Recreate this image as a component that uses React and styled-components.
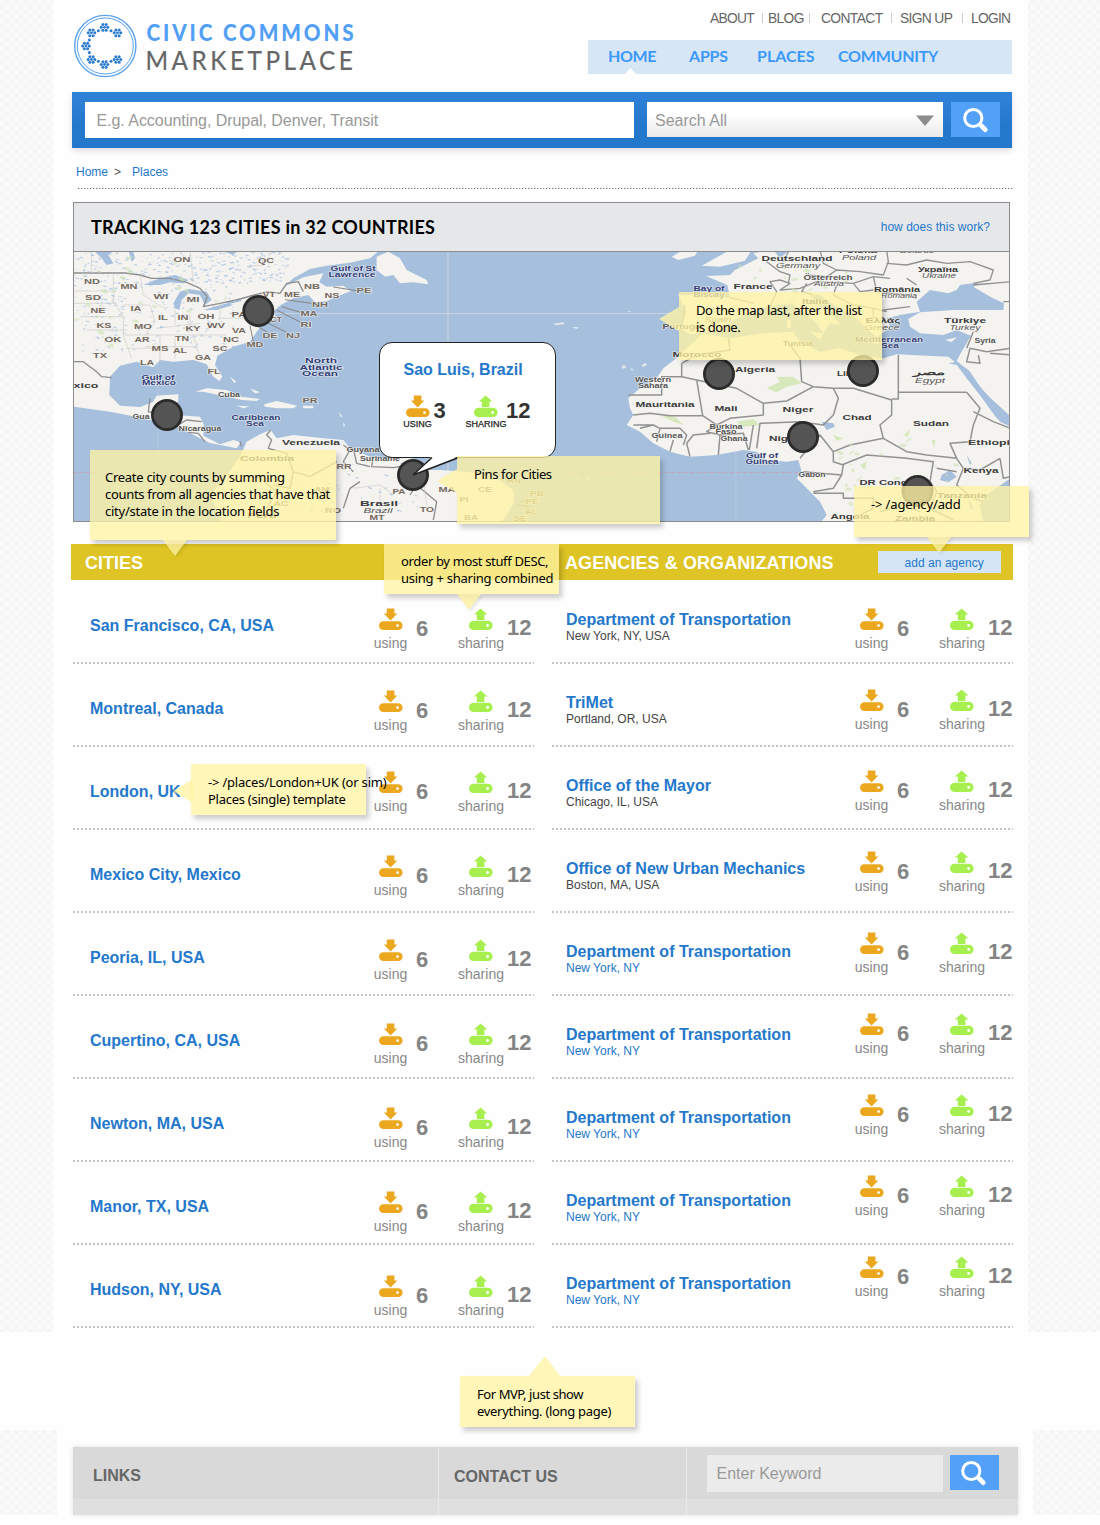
import React from "react";
import styled, { createGlobalStyle, css } from "styled-components";

const Global = createGlobalStyle`
  *, *::before, *::after { box-sizing: border-box; }
  body { margin: 0; background: #fefefe; font-family: "Liberation Sans", Arial, sans-serif; }
`;

const blue = "#2478cc";
const checks = css`
  background: repeating-conic-gradient(#f5f5f5 0 25%, #fafafa 0 50%) 0 0 / 9.34px 9.34px;
`;

const Page = styled.div`
  position: relative;
  width: 1100px;
  height: 1525px;
  overflow: hidden;
`;
const Backdrop = styled.div`
  ${checks}
  height: 1332px;
  padding-left: 53px;
`;
const Sheet = styled.main`
  width: 975px;
  height: 1332px;
  padding: 0 15px 0 19px;
  background: #fefefe;
`;

/* Header */
const Header = styled.header`
  display: flex;
  justify-content: space-between;
  height: 92px;
  padding: 0 1px 0 2px;
`;
const LogoSvg = styled.svg`
  margin-top: 14px;
  display: block;
`;
const HeaderRight = styled.div`
  width: 424px;
  padding-top: 11px;
`;
const TopLinks = styled.div`
  display: flex;
  justify-content: flex-end;
  height: 16px;
  align-items: center;
`;
const TopLink = styled.a`
  width: ${(p) => p.$w}px;
  padding-left: ${(p) => p.$pad}px;
  font-size: 13.8px;
  line-height: 16px;
  letter-spacing: ${(p) => p.$ls}px;
  color: #666;
  white-space: nowrap;
  background: ${(p) => (p.$last ? "none" : "linear-gradient(#ccc, #ccc) right 0 top 2px / 1px 10px no-repeat")};
`;
const Nav = styled.nav`
  display: flex;
  height: 34px;
  margin-top: 13px;
  padding-left: 20px;
  background: #d7e6f5;
`;
const NavItem = styled.a`
  display: flex;
  flex-direction: column;
  justify-content: space-between;
  width: ${(p) => p.$w}px;
  font: 700 16px/32px Lato, sans-serif;
  letter-spacing: ${(p) => p.$ls}px;
  color: #3a99fb;
`;
const Caret = styled.svg`
  display: block;
  margin: -4px 0 0 15px;
`;

/* Search */
const SearchBar = styled.form`
  display: flex;
  width: 940px;
  height: 56px;
  padding: 10px 12px 0 13px;
  background: linear-gradient(#2f82d8, #2478cc 60%);
  box-shadow: 0 3px 6px rgba(0, 0, 0, 0.12);
`;
const FieldText = styled.span`
  font-size: 16px;
  color: #999;
  white-space: nowrap;
  letter-spacing: ${(p) => p.$ls || 0}px;
`;
const SearchField = styled.div`
  width: 549px;
  height: 36px;
  padding-left: 11.5px;
  line-height: 37px;
  background: #fff;
`;
const SearchSelect = styled.div`
  display: flex;
  align-items: center;
  justify-content: space-between;
  width: 296px;
  height: 35px;
  margin: 0 8px 0 13px;
  padding: 2px 9px 0 8px;
  background: linear-gradient(#fff 35%, #e9e9e9);
`;
const SearchButton = styled.div`
  display: flex;
  align-items: center;
  justify-content: center;
  width: 49px;
  height: 35px;
  background: #52a0f8;
`;

const Crumbs = styled.div`
  display: flex;
  height: 41px;
  margin-left: 6px;
  padding: 16px 0 0;
  font-size: 12px;
  line-height: 16px;
  color: ${blue};
  background: repeating-linear-gradient(90deg, #777 0 1px, #ccc 1px 2px, #fff 2px 3px) bottom / 100% 1px no-repeat;
`;
const Crumb = styled.a`
  margin-left: ${(p) => p.$ml}px;
  letter-spacing: ${(p) => p.$ls || 0}px;
  color: ${(p) => p.$color || blue};
`;

/* Map panel */
const MapPanel = styled.section`
  position: relative;
  width: 937px;
  height: 320px;
  margin: 13px 0 0 1px;
  border: 1px solid #8c8c8e;
`;
const MapHeader = styled.div`
  display: flex;
  align-items: center;
  justify-content: space-between;
  height: 49px;
  padding: 0 19px 0 17px;
  background: #e6e7e9;
  border-bottom: 1px solid #8c8c8e;
`;
const MapTitle = styled.h1`
  margin: 0;
  font: 700 18px/24px Lato, sans-serif;
  letter-spacing: 0.27px;
  color: #000;
`;
const HelpLink = styled.a`
  font-size: 12px;
  letter-spacing: 0.03px;
  color: ${blue};
`;
const MapSvg = styled.svg`
  display: block;
  width: 935px;
  height: 269px;
`;
const Callout = styled.div`
  position: absolute;
  left: 304.5px;
  top: 139px;
  width: 177px;
  height: 116px;
  padding: 18px 0 0 24px;
  background: #fff;
  border: 1.5px solid #222;
  border-radius: 13px;
`;
const CalloutTail = styled.svg`
  position: absolute;
  left: 32px;
  top: 112.5px;
`;
const CalloutTitle = styled.div`
  font-size: 16px;
  line-height: 18px;
  font-weight: 700;
  color: ${blue};
`;
const CalloutStats = styled.div`
  display: flex;
  margin: 16px 0 0;
`;

/* Section bar and lists */
const SectionBar = styled.div`
  display: flex;
  width: 942px;
  height: 36px;
  margin: 22px 0 0 -1px;
  padding: 7px 12px 0 14px;
  background: #dec424;
`;
const SectionTitle = styled.h2`
  width: ${(p) => p.$w}px;
  margin: 0;
  font-size: 18px;
  line-height: 24px;
  letter-spacing: ${(p) => p.$ls || 0}px;
  color: #fff;
  white-space: nowrap;
`;
const AddButton = styled.a`
  width: 123px;
  height: 22px;
  padding-left: 26.5px;
  font-size: 12px;
  line-height: 25px;
  letter-spacing: 0.05px;
  color: ${blue};
  background: #d6e5f5;
`;
const Lists = styled.div`
  display: flex;
  gap: 18px;
  padding: 1px 0 0 1px;
`;
const List = styled.div`
  width: 461px;
`;
const Row = styled.div`
  display: flex;
  justify-content: space-between;
  height: 83px;
  padding: 0 ${(p) => p.$right}px 0 ${(p) => p.$left}px;
  background: repeating-linear-gradient(90deg, #c4c4c4 0 2px, #fefefe 2px 4px) bottom / 100% 2px no-repeat;
`;
const Name = styled.div`
  padding-top: ${(p) => p.$top}px;
  font-size: 16px;
  line-height: 18px;
  font-weight: 700;
  color: ${blue};
  white-space: nowrap;
`;
const Place = styled.div`
  margin-top: -1px;
  font-size: 12px;
  line-height: 16px;
  font-weight: 400;
  letter-spacing: 0;
  color: ${(p) => (p.$link ? blue : "#444")};
`;
const Stats = styled.div`
  display: flex;
  width: 158px;
  padding-top: ${(p) => 27 + p.$shift}px;
  white-space: nowrap;
`;
const Stat = styled.div`
  display: flex;
  width: ${(p) => p.$w}px;
  flex: none;
`;
const StatIcon = styled.div`
  display: flex;
  flex-direction: column;
  align-items: center;
  width: ${(p) => p.$w}px;
  color: ${(p) => (p.$small ? "#222" : "#888")};
  -webkit-text-stroke: ${(p) => (p.$small ? "0.25px #222" : "0")};
  font-size: ${(p) => (p.$small ? 9 : 14)}px;
  line-height: ${(p) => (p.$small ? 12 : 16)}px;
  gap: ${(p) => (p.$small ? 1 : 5)}px;
`;
const StatValue = styled.div`
  margin-left: ${(p) => p.$ml}px;
  padding-top: ${(p) => p.$top}px;
  font-size: 22px;
  line-height: 24px;
  font-weight: 700;
  color: ${(p) => (p.$dark ? "#333" : "#848484")};
`;

/* Sticky notes */
const NoteBox = styled.aside`
  position: absolute;
  left: ${(p) => p.$x}px;
  top: ${(p) => p.$y}px;
  width: ${(p) => p.$w}px;
  height: ${(p) => p.$h}px;
  padding: ${(p) => p.$pt}px 0 0 ${(p) => p.$pl}px;
  background: rgba(255, 243, 163, 0.77);
  box-shadow: 3px 4px 5px rgba(0, 0, 0, 0.2);
  font: 13px/17px "Noto Sans", sans-serif;
  color: #000;
  white-space: nowrap;
`;
const NoteLine = styled.div`
  letter-spacing: ${(p) => p.$ls}px;
`;
const NoteTip = styled.svg`
  position: absolute;
  left: ${(p) => p.$x}px;
  top: ${(p) => p.$y}px;
  filter: ${(p) => (p.$shadow ? "drop-shadow(2px 2px 1.5px rgba(0, 0, 0, 0.1))" : "none")};
`;

/* Footer */
const FooterWrap = styled.footer`
  ${checks}
  height: 85px;
  margin-top: 98px;
  padding-left: 57px;
`;
const FooterSheet = styled.div`
  width: 976px;
  height: 85px;
  padding: 17px 15px 0 15.5px;
  background: #fefefe;
`;
const FooterPanel = styled.div`
  display: flex;
  height: 68px;
  background: linear-gradient(#d9d9d9 52px, #dfdfdf 52px);
  box-shadow: 0 0 5px rgba(0, 0, 0, 0.12);
`;
const FooterCol = styled.div`
  display: flex;
  width: ${(p) => p.$w}px;
  padding: ${(p) => p.$pt}px 0 0 ${(p) => p.$pl}px;
  border-right: ${(p) => (p.$w ? "1px solid #e8e8e8" : "none")};
  font-size: 16px;
  line-height: 20px;
  font-weight: 700;
  letter-spacing: ${(p) => p.$ls || 0}px;
  color: #666;
`;
const FooterField = styled.div`
  width: 236px;
  height: 37px;
  margin-right: 7px;
  padding-left: 10px;
  line-height: 38px;
  font-weight: 400;
  background: #ebebeb;
`;

/* ---------- drawings ---------- */

const Flower = ({ x, y }) => (
  <g fill="#2b7bd0">
    <circle cx={x} cy={y} r="1.4" />
    {[0, 60, 120, 180, 240, 300].map((a) => (
      <circle
        key={a}
        cx={x + 3.3 * Math.cos((a * Math.PI) / 180)}
        cy={y + 3.3 * Math.sin((a * Math.PI) / 180)}
        r="1.5"
      />
    ))}
  </g>
);

const Logo = () => (
  <LogoSvg width="284" height="66" viewBox="74 14 284 66">
    <g fill="none" stroke="#5ba3ee">
      <circle cx="105.3" cy="46" r="30.6" strokeWidth="1.4" />
      <circle cx="105.3" cy="46" r="28" strokeWidth="1" />
    </g>
    {[
      [104.5, 27.3],
      [91.5, 32.8],
      [117.5, 32.8],
      [86, 46],
      [91.5, 59.5],
      [104.5, 64.5],
      [117.5, 59.5],
    ].map(([x, y]) => (
      <Flower key={x + "," + y} x={x} y={y} />
    ))}
    {[
      [98.3, 30.8],
      [111, 30.8],
      [89.3, 40],
      [89.3, 52.5],
      [98.3, 61.3],
      [111, 61.3],
    ].map(([x, y]) => (
      <circle key={x + "," + y} cx={x} cy={y} r="1.5" fill="#2b7bd0" />
    ))}
    <g fontFamily="Lato, sans-serif">
      <text transform="translate(146.5 41) scale(.88 1)" fontSize="23.5" fontWeight="900" fill="#529ff6" textLength="235.5" lengthAdjust="spacing">
        CIVIC COMMONS
      </text>
      <text transform="translate(145.5 70) scale(.92 1)" fontSize="26.5" fill="#666" stroke="#666" strokeWidth=".2" textLength="225.5" lengthAdjust="spacing">
        MARKETPLACE
      </text>
    </g>
  </LogoSvg>
);

const Magnifier = () => (
  <svg width="26" height="26" viewBox="0 0 26 26" fill="none" stroke="#fff">
    <circle cx="10.3" cy="11" r="8.6" strokeWidth="3" />
    <path d="M16.8 17.300l1.500 1.500" strokeWidth="3.5" />
    <path d="M18.600 19l3.600 3.600" strokeWidth="4.800" strokeLinecap="round" />
  </svg>
);

const DriveSvg = styled.svg`
  display: block;
`;
const DownDrive = () => (
  <DriveSvg width="24" height="22" viewBox="0.4 -0.4 24 22">
    <path d="M8.2 0h7.6v5h3L12 12 5.2 5h3z" fill="#eba81f" />
    <rect y="12.800" x=".4" width="23.600" height="8.800" rx="4.400" fill="#eba81f" />
    <circle cx="19" cy="17.2" r="1.4" fill="#fff" />
  </DriveSvg>
);
const UpDrive = () => (
  <DriveSvg width="24" height="22" viewBox="0.4 0 24 22">
    <path d="M8.2 12h7.6V6.6h3L12 .4 5.2 6.6h3z" fill="#a6ef4f" />
    <rect y="12.8" x=".4" width="23.600" height="9.2" rx="4.6" fill="#a6ef4f" />
    <circle cx="19" cy="17.5" r="1.4" fill="#fff" />
  </DriveSvg>
);

const RowStats = ({ shift }) => (
  <Stats $shift={shift}>
    <Stat $w={84}>
      <StatIcon $w={33}>
        <DownDrive />
        using
      </StatIcon>
      <StatValue $ml={9} $top={9}>6</StatValue>
    </Stat>
    <Stat $w={74}>
      <StatIcon $w={46}>
        <UpDrive />
        sharing
      </StatIcon>
      <StatValue $ml={3} $top={8}>12</StatValue>
    </Stat>
  </Stats>
);

/* label: text, centre x, baseline y, width, kind */
const mapLabels = [
  ["ON", 182, 262, 17, "s"], ["QC", 266, 263, 16, "s"],
  ["ND", 92, 284, 16, "s"], ["MN", 129, 289, 17, "s"], ["SD", 93, 300, 16, "s"], ["WI", 161, 299, 15, "s"],
  ["MI", 193, 302, 13, "s"], ["NE", 98, 313, 15, "s"], ["IA", 136, 311, 11, "s"], ["IL", 163, 320, 10, "s"],
  ["IN", 183, 320, 11, "s"], ["OH", 206, 319, 17, "s"], ["PA", 239, 317, 15, "s"], ["KS", 104, 328, 15, "s"],
  ["MO", 143, 329, 18, "s"], ["KY", 193, 331, 15, "s"], ["WV", 216, 328, 18, "s"], ["VA", 239, 333, 14, "s"],
  ["OK", 113, 342, 17, "s"], ["AR", 142, 342, 15, "s"], ["TN", 182, 341, 14, "s"], ["NC", 231, 342, 16, "s"],
  ["MS", 160, 351, 17, "s"], ["AL", 180, 353, 14, "s"], ["SC", 220, 351, 15, "s"], ["TX", 100, 358, 14, "s"],
  ["GA", 203, 360, 16, "s"], ["LA", 147, 365, 14, "s"], ["FL", 214, 374, 13, "s"],
  ["VT", 269, 297, 13, "s"], ["ME", 292, 297, 16, "s"], ["NB", 312, 289, 16, "s"], ["NS", 332, 298, 15, "s"],
  ["PE", 364, 293, 15, "s"], ["NH", 320, 307, 16, "s"], ["MA", 309, 316, 17, "s"], ["CT", 276, 322, 12, "s"],
  ["RI", 306, 327, 11, "s"], ["DE", 270, 338, 15, "s"], ["NJ", 293, 338, 14, "s"], ["MD", 255, 347, 17, "s"],
  ["Gulf of St", 353, 271, 45, "w"], ["Lawrence", 352, 277, 47, "w"],
  ["North", 321, 363, 32, "w"], ["Atlantic", 321, 370, 43, "w"], ["Ocean", 320, 376, 36, "w"],
  ["Gulf of", 158, 380, 33, "w"], ["Mexico", 159, 385, 34, "w"],
  ["xico", 86, 388, 25, "c"], ["Cuba", 229, 397, 22, "t"], ["PR", 310, 403, 15, "s"],
  ["Caribbean", 256, 420, 49, "w"], ["Sea", 255, 426, 18, "w"], ["Gua", 141, 419, 17, "t"],
  ["Nicaragua", 200, 431, 43, "t"], ["Venezuela", 311, 445, 58, "c"], ["Guyana", 363, 452, 33, "t"],
  ["Suriname", 380, 461, 40, "t"], ["Colombia", 267, 461, 54, "c"], ["RR", 344, 469, 15, "s"],
  ["AM", 322, 492, 15, "s"], ["AC", 281, 506, 15, "s"], ["RO", 333, 513, 16, "s"], ["Perú", 262, 518, 30, "c"],
  ["PA", 399, 494, 13, "s"], ["Brasil", 379, 506, 38, "c"], ["Brazil", 378, 513, 29, "i"],
  ["MT", 377, 520, 15, "s"], ["TO", 427, 512, 14, "s"], ["MA", 447, 492, 17, "s"], ["CE", 485, 492, 14, "s"],
  ["PI", 464, 502, 9, "s"], ["RN", 514, 483, 14, "s"], ["PB", 537, 496, 14, "s"], ["PE", 532, 504, 13, "s"],
  ["AL", 531, 514, 12, "s"], ["BA", 471, 520, 14, "s"], ["SE", 520, 521, 13, "s"],
  ["Deutschland", 797, 261, 71, "c"], ["Germany", 798, 268, 44, "i"], ["Polska", 858, 253, 38, "c"], ["Poland", 859, 260, 34, "i"],
  ["Österreich", 828, 280, 49, "t"], ["Austria", 829, 286, 30, "i"], ["France", 753, 289, 39, "c"],
  ["Україна", 938, 272, 40, "c"], ["Ukraine", 939, 278, 34, "i"], ["Belarus", 917, 253, 34, "i"],
  ["România", 897, 292, 46, "c"], ["Romania", 899, 298, 36, "i"],
  ["Bay of", 709, 291, 31, "w"], ["Biscay", 709, 297, 31, "w"], ["Italia", 815, 304, 26, "c"],
  ["Spain", 718, 322, 27, "i"], ["Portugal", 683, 329, 41, "t"], ["Tunisia", 798, 346, 30, "t"],
  ["Ελλάς", 883, 323, 35, "c"], ["Greece", 882, 330, 35, "i"], ["Türkiye", 965, 323, 42, "c"], ["Turkey", 965, 330, 31, "i"],
  ["Mediterranean", 889, 342, 68, "w"], ["Sea", 890, 348, 18, "w"], ["Syria", 985, 343, 21, "t"],
  ["Morocco", 697, 357, 49, "c"], ["Algeria", 755, 372, 40, "c"], ["Libya", 850, 376, 26, "c"],
  ["مصر", 929, 375, 32, "c"], ["Egypt", 930, 383, 30, "i"],
  ["Western", 653, 382, 36, "t"], ["Sahara", 653, 388, 30, "t"], ["Mauritania", 665, 407, 59, "c"],
  ["Mali", 726, 411, 23, "c"], ["Niger", 798, 412, 31, "c"], ["Chad", 857, 420, 29, "c"], ["Sudan", 931, 426, 36, "c"],
  ["Burkina", 726, 429, 33, "t"], ["Faso", 726, 434, 21, "t"], ["Guinea", 667, 438, 31, "t"],
  ["Ghana", 734, 441, 27, "t"], ["Nigeria", 789, 441, 40, "c"], ["Ethiopi", 989, 445, 42, "c"],
  ["Gulf of", 762, 458, 32, "w"], ["Guinea", 762, 464, 33, "w"], ["Kenya", 981, 473, 35, "c"],
  ["Gabon", 812, 477, 27, "t"], ["DR Congo", 887, 485, 55, "c"], ["Tanzania", 962, 498, 50, "c"],
  ["Angola", 850, 519, 39, "c"], ["Zambia", 915, 521, 40, "c"],
];
const labelStyles = {
  s: { fill: "#74695f", fontSize: 7.8, fontWeight: 700 },
  c: { fill: "#3b3b3b", fontSize: 8, fontWeight: 700 },
  t: { fill: "#555", fontSize: 6.8, fontWeight: 700 },
  w: { fill: "#2f3c78", fontSize: 7.2, fontWeight: 700 },
  i: { fill: "#555", fontSize: 7.4, fontStyle: "italic" },
};

/* Small deterministic scatter used for the lakes and woodland patches. */
const scatter = (n, x0, y0, w, h, seed) => {
  let s = seed;
  const next = () => {
    s = (s * 16807) % 2147483647;
    return s / 2147483647;
  };
  return Array.from({ length: n }, () => [x0 + next() * w, y0 + next() * h, next(), next()]);
};
const lakes = [
  ...scatter(300, 74, 252, 215, 32, 7),
  ...scatter(130, 100, 280, 135, 70, 23),
  ...scatter(50, 75, 284, 50, 70, 99),
  ...scatter(70, 290, 462, 130, 50, 41),
];
const woods = [...scatter(26, 76, 254, 150, 100, 5), ...scatter(34, 840, 435, 150, 75, 17), ...scatter(26, 740, 265, 110, 40, 61)];

const WorldMap = () => (
  <MapSvg viewBox="74 252 935 269">
    <rect x="73" y="251" width="938" height="271" fill="#a5bfdd" />
    <path d="M448 251V521M73 313.500H690" stroke="#c9d3e0" strokeWidth="1.2" />
    <path d="M158 350V521M736 440V521" stroke="#b4c6de" />
    <path d="M73 472.500H1010" stroke="#c3a5bd" strokeDasharray="4 2.500" />
    <g transform="translate(60 195) scale(.33333)" strokeLinejoin="round">
      <g fill="#f4f3f0">
        <path d="M40 165H700L735 165H960L930 190 870 203 800 212 750 222 700 250 672 275 730 247 790 235 778 262 800 275 850 272 872 288 800 318 765 322 745 300 700 310 662 330 640 350 650 370 612 385 590 410 570 440 520 455 472 482 465 510 487 545 478 558 460 545 440 508 400 495 340 500 300 495 280 517 230 500 180 512 150 545 148 600 180 632 240 636 278 622 290 602 355 598 355 618 332 640 345 660 420 665 432 690 430 722 480 748 520 735 542 742 530 760 450 744 390 715 350 692 220 664 150 650 40 635Z" />
        <path d="M950 185L985 170 1020 190 1040 225 1100 255 1105 268 1060 262 1020 265 1000 240 975 245 950 225Z" />
        <path d="M405 590L440 580 500 585 545 605 600 612 590 618 545 615 490 603 430 590ZM612 628L650 618 712 632 700 640 650 640 615 635ZM728 632H760V640H730ZM530 632L570 634 550 640ZM510 545L530 560 522 563ZM570 580L600 592 585 595Z" />
        <path d="M540 785L560 740 600 718 632 705 650 730 700 720 790 730 850 735 870 760 940 790 1050 785 1085 825 1140 825 1230 832 1310 850 1360 885 1362 920 1340 960 1320 985H490L450 900 490 855Z" />
      </g>
      <g fill="#f4f3f0" fillOpacity=".8">
        <path d="M835 650l12 14-4 4zM850 680l6 12-6 2zM1480 386l30-4 4 5-26 4zM1535 397l20-1-4 6zM1700 350l12-2 0 3z" />
        <path d="M1685 513l10-2 3 8-10 2zM1710 520l10 2-4 6zM1745 510l12-6 4 6-12 6zM1545 845l10 3-6 4zM1575 850l14-2-4 8zM1590 868l12-4 0 4z" />
      </g>
      <g fill="#a5bfdd">
        <path d="M250 270L300 250 345 240 385 255 370 265 330 262 300 270ZM340 325L360 290 385 282 440 290 455 315 435 330 420 300 385 295 365 315 358 345 345 340ZM430 345L500 325 520 330 470 345ZM500 322L540 312 545 318 505 328ZM100 165L125 190 140 210 160 205 145 180 165 165ZM480 165L520 180 530 165ZM205 165L215 200 225 190 218 165Z" />
      </g>
      <g fill="none" stroke="#8d8d8d" strokeWidth="4">
        <path d="M40 234H195L240 240 275 250 330 250 380 262 420 280 442 305 430 335 480 325 540 312 590 298 625 290 660 295 680 265 715 260 730 290M40 500L70 500 110 530 125 545 155 548M270 610L265 650 320 665M350 692L380 675 425 680M385 712L415 715 435 740M540 740L545 755M632 705L620 720 635 735 625 760 680 775 700 830 690 880 640 870M850 750L870 765 850 800 880 830M880 760L890 805 930 815M940 785L935 815 1000 818 1050 810M540 840L600 850 650 890 620 940M700 830L750 845 830 800M850 940L870 880 900 860M1050 900L1070 870 1130 920 1120 975" />
      </g>
      <g fill="none" stroke="#cfcbc6" strokeWidth="2">
        <path d="M40 288H160M40 325H170M60 365H190M80 405H200M160 235V320L190 365V420L215 490M240 240L250 300 320 345M190 330H270L285 380 255 420H195M345 345V390M390 345V400M290 400L420 385M255 420H500M255 455H400M300 420V500M345 420V490M400 420L420 490M480 325V370H560M430 365L470 400M200 460H280M95 165V234M390 165L400 262M640 165L610 210 560 215" />
        <path d="M880 880L960 870 1000 900M960 880V975M1090 850L1100 930" />
      </g>
      <g stroke="#8a8480" strokeWidth="3">
        <path d="M820 276L890 287M675 314L755 325M665 335L722 352M650 345L722 382M625 385L680 412M585 390L620 410M570 392L580 440M1380 920L1400 915M1370 930L1410 935" />
      </g>
    </g>
    <g transform="translate(620 195) scale(.33333)" strokeLinejoin="round">
      <g fill="#f4f3f0">
        <path d="M200 460L175 485 130 520 110 550 60 580 25 610 30 640 40 660 20 690 60 710 100 745 150 770 210 785 290 780 370 765 410 770 440 795 500 800 535 795 545 830 530 850 560 880 600 920 620 960 600 985H1090L1080 930 1100 900 1172 850V692L1130 670 1080 600 1040 550 1010 505 985 485 830 478 790 490 720 480 660 460 600 470 540 440 520 410 430 415 330 430 250 415Z" />
        <path d="M1010 498L1050 530 1090 590 1140 635 1172 665V395L1060 408 1040 445 1022 475Z" />
        <path d="M865 372L900 352 1000 345 1172 345V418L1060 425 1010 405 970 420 900 415 870 395Z" />
        <path d="M385 205L415 190 400 175 450 165H1172V345H1150L1152 325 1110 305 1060 275 1080 262 1020 270 1010 285 985 295 930 285 890 320 900 350 840 360 800 370 812 400 770 425 745 405 715 375 680 350 640 330 600 300 575 300 590 330 640 365 660 390 630 385 610 415 590 385 545 345 510 325 450 335 400 345 350 370 300 405 210 418 180 400 200 350 175 300 220 300 330 308 322 270 258 243 330 240 345 225Z" />
        <path d="M245 212L285 190 330 165H395L375 197 300 215ZM155 185L190 165H235L225 182 175 195ZM570 410l40 5-10 18zM500 375l12 0 2 22-12 2zM975 435l35-8-15 14zM740 440l50 2-20 5z" />
      </g>
      <g fill="#a5bfdd">
        <path d="M965 840L990 825 1010 845 985 862 960 855ZM605 680L640 685 645 695 620 705ZM1040 780L1055 805 1050 810ZM1045 905L1060 940 1052 942ZM460 165L480 190 500 172 490 165ZM985 505L1010 510 1080 600 1140 680 1172 695 1172 668 1130 630 1080 575 1045 525 1010 500Z" />
        <path d="M1172 850L1100 900 1080 930 1092 985H1172Z" />
      </g>
      <g fill="#cfe5b0" fillOpacity=".8">
        <path d="M440 580L480 560 470 545 520 545 545 565 500 575 470 592ZM350 680L400 672 420 690 370 695ZM120 660L165 665 190 690 160 680ZM720 810L740 800 735 825ZM850 720l20-15-5 20zM935 735l12 0-5 25zM640 720l30 10-20 8z" />
      </g>
      <g fill="none" stroke="#929292" strokeWidth="4.500">
        <path d="M185 505V545H125V600H25M185 505L230 480 330 465 325 430M185 545L230 555 350 580 430 625 500 618 580 575 545 560 540 490 510 450M230 555L248 662H150L90 655 40 660M248 662L290 690 330 670 430 660V625M580 575L640 580 655 610 640 660 610 690 540 680 420 685 410 760M640 580L700 580 815 615V660L780 690 790 730 690 750 640 770M835 480V612H815M835 592H1040M1040 592L1080 640 1060 690 1050 740 990 745 1010 790 920 780 860 770 790 730M1060 650L1120 680 1172 700M1010 790L1030 820 1080 825 1140 790M1140 790L1150 850 1172 845M640 770L640 800 670 810 665 840 550 830M640 770L600 720 580 740 540 790M665 840L640 880 580 890M580 895H670V910H760V940L700 970M665 810L740 780 860 790 940 800 930 860 950 890M950 820L1010 830M1030 820L1010 870 1060 910 1090 920M950 890L930 940 1000 975M780 950L850 930 900 950" />
        <path d="M40 690L100 690 120 700 110 740M60 700L100 690M120 700L180 700 200 720 190 750M150 770L160 735M210 785L200 745 220 720 270 715M290 690L260 710 300 720 295 780M300 720L370 715 385 765M400 690L388 765M1172 460L1100 470 1050 460 1040 500 1080 505 1075 480M1060 410L1040 460M1110 475L1172 480" />
        <path d="M330 308L400 325M450 335L470 290 450 260 480 255 510 265 480 285 540 280 590 260 700 265 760 245 810 250M440 200L480 230 510 240 505 265M505 170L490 200M600 165L610 205 650 225 620 245 560 240M650 225L720 230 790 240 805 200 800 165M560 265L545 290 580 300M650 270L640 300 700 330 760 340 800 350M700 265L720 290 760 285M760 245L770 290 860 300 890 310M860 250L890 270M800 205L860 210 920 195 980 205 1050 200 1120 225 1110 255 1060 265M760 340L760 380M790 345L870 335M1060 270L1172 260M1150 320H1172M195 330L185 400" strokeWidth="4" />
      </g>
    </g>
    <g fill="#a9c3e2">
      {lakes.map(([x, y, a, b], i) => (
        <ellipse key={i} cx={x} cy={y} rx={0.5 + a * 1.7} ry={0.3 + b * 0.5} transform={`rotate(${-60 + a * 80} ${x} ${y})`} fillOpacity=".75" />
      ))}
    </g>
    <g fill="#cde3b4">
      {woods.map(([x, y, a, b], i) => (
        <ellipse key={i} cx={x} cy={y} rx={1 + a * 3} ry={0.8 + b * 1.2} transform={`rotate(${-40 + b * 80} ${x} ${y})`} fillOpacity=".6" />
      ))}
    </g>
    <g fontFamily='"Liberation Sans", Arial, sans-serif' stroke="#f4f3f0" strokeWidth="1.2" strokeOpacity=".75" paintOrder="stroke" textAnchor="middle">
      {mapLabels.map(([text, x, y, w, kind], i) => (
        <text key={i} x={x} y={y} textLength={w} lengthAdjust="spacingAndGlyphs" {...labelStyles[kind]}>
          {text}
        </text>
      ))}
    </g>
    <g fill="#545454" stroke="#2b2b2b" strokeWidth="2.800">
      {[
        [258.3, 311],
        [167, 415],
        [413, 475],
        [719, 374],
        [863, 371],
        [803, 437],
        [917.5, 491],
      ].map(([x, y]) => (
        <circle key={x} cx={x} cy={y} r="14.600" />
      ))}
    </g>
  </MapSvg>
);

const tips = {
  down: { w: 24, h: 16, points: "0,0 24,0 12,16" },
  up: { w: 31, h: 20, points: "0,20 31,20 16,0" },
  left: { w: 20, h: 24, points: "20,0 20,24 0,12" },
};
const Note = ({ x, y, w, h, pt, pl, tip, tipX, tipY, lines }) => (
  <NoteBox $x={x} $y={y} $w={w} $h={h} $pt={pt} $pl={pl}>
    <NoteTip $x={tipX} $y={tipY} $shadow={tip === "down"} width={tips[tip].w} height={tips[tip].h}>
      <polygon points={tips[tip].points} fill="#fff3a3" fillOpacity=".77" />
    </NoteTip>
    {lines.map(([text, ls]) => (
      <NoteLine key={text} $ls={ls}>
        {text}
      </NoteLine>
    ))}
  </NoteBox>
);

const notes = [
  { x: 90, y: 450, w: 246, h: 90, pt: 18.5, pl: 15, tip: "down", tipX: 73, tipY: 90,
    lines: [["Create city counts by summing", -0.28], ["counts from all agencies that have that", -0.32], ["city/state in the location fields", -0.25]] },
  { x: 384, y: 544, w: 175, h: 50, pt: 8.5, pl: 17, tip: "down", tipX: 73, tipY: 50,
    lines: [["order by most stuff DESC,", -0.35], ["using + sharing combined", -0.26]] },
  { x: 457, y: 456, w: 203, h: 68, pt: 9.5, pl: 17, tip: "left", tipX: -20, tipY: 13, lines: [["Pins for Cities", -0.36]] },
  { x: 679, y: 292, w: 203, h: 68, pt: 9.5, pl: 17, tip: "left", tipX: -20, tipY: 15,
    lines: [["Do the map last, after the list", -0.37], ["is done.", -0.42]] },
  { x: 854, y: 486, w: 175, h: 51, pt: 9.5, pl: 17, tip: "down", tipX: 73, tipY: 51, lines: [["-> /agency/add", -0.14]] },
  { x: 191, y: 764, w: 175, h: 51, pt: 9.5, pl: 17, tip: "left", tipX: -18, tipY: 15,
    lines: [["-> /places/London+UK (or sim)", -0.2], ["Places (single) template", -0.27]] },
  { x: 460, y: 1376, w: 175, h: 51, pt: 9.5, pl: 17, tip: "up", tipX: 69, tipY: -20,
    lines: [["For MVP, just show", -0.43], ["everything. (long page)", -0.3]] },
];

const cities = [
  ["San Francisco, CA, USA", 0],
  ["Montreal, Canada", -1],
  ["London, UK", -3],
  ["Mexico City, Mexico", -2],
  ["Peoria, IL, USA", -1],
  ["Cupertino, CA, USA", 0],
  ["Newton, MA, USA", 1],
  ["Manor, TX, USA", 2],
  ["Hudson, NY, USA", 3],
];
const agencies = [
  ["Department of Transportation", "New York, NY, USA"],
  ["TriMet", "Portland, OR, USA"],
  ["Office of the Mayor", "Chicago, IL, USA"],
  ["Office of New Urban Mechanics", "Boston, MA, USA"],
  ...Array.from({ length: 5 }, () => ["Department of Transportation", "New York, NY", true]),
];

export default function App() {
  return (
    <Page>
      <Global />
      <Backdrop>
        <Sheet>
          <Header>
            <Logo />
            <HeaderRight>
              <TopLinks>
                <TopLink $w={53} $pad={0} $ls={-0.7}>ABOUT</TopLink>
                <TopLink $w={47} $pad={5} $ls={-0.65}>BLOG</TopLink>
                <TopLink $w={82} $pad={11} $ls={-0.6}>CONTACT</TopLink>
                <TopLink $w={71} $pad={8} $ls={-0.65}>SIGN UP</TopLink>
                <TopLink $w={49} $pad={8} $ls={-0.75} $last>LOGIN</TopLink>
              </TopLinks>
              <Nav>
                <NavItem $w={81} $ls={-0.35}>
                  HOME
                  <Caret width="15" height="8">
                    <path d="M0 8L7.500 0 15 8z" fill="#fefefe" />
                  </Caret>
                </NavItem>
                <NavItem $w={68} $ls={-0.2}>APPS</NavItem>
                <NavItem $w={81} $ls={0}>PLACES</NavItem>
                <NavItem $w={100} $ls={-0.25}>COMMUNITY</NavItem>
              </Nav>
            </HeaderRight>
          </Header>

          <SearchBar>
            <SearchField>
              <FieldText $ls={-0.05}>E.g. Accounting, Drupal, Denver, Transit</FieldText>
            </SearchField>
            <SearchSelect>
              <FieldText>Search All</FieldText>
              <svg width="18" height="11">
                <path d="M0 .5H18L9 11z" fill="#8c8c8c" />
              </svg>
            </SearchSelect>
            <SearchButton>
              <Magnifier />
            </SearchButton>
          </SearchBar>

          <Crumbs>
            <Crumb $ml={-2}>Home</Crumb>
            <Crumb $ml={6} $color="#555">&gt;</Crumb>
            <Crumb $ml={11}>Places</Crumb>
          </Crumbs>

          <MapPanel>
            <MapHeader>
              <MapTitle>TRACKING 123 CITIES in 32 COUNTRIES</MapTitle>
              <HelpLink>how does this work?</HelpLink>
            </MapHeader>
            <WorldMap />
            <Callout>
              <CalloutTitle>Sao Luis, Brazil</CalloutTitle>
              <CalloutStats>
                <Stat $w={62}>
                  <StatIcon $w={28} $small>
                    <DownDrive />
                    USING
                  </StatIcon>
                  <StatValue $ml={2} $top={4} $dark>3</StatValue>
                </Stat>
                <Stat $w={68}>
                  <StatIcon $w={41} $small>
                    <UpDrive />
                    SHARING
                  </StatIcon>
                  <StatValue $ml={-0.5} $top={4} $dark>12</StatValue>
                </Stat>
              </CalloutStats>
              <CalloutTail width="50" height="22" viewBox="0 0 50 22">
                <path d="M20 0L1 19.500 47 0z" fill="#fff" />
                <path d="M20 1.500L1 19 47 1.500" fill="none" stroke="#222" strokeWidth="1.500" />
              </CalloutTail>
            </Callout>
          </MapPanel>

          <SectionBar>
            <SectionTitle $w={480}>CITIES</SectionTitle>
            <SectionTitle $w={313} $ls={0.08}>AGENCIES &amp; ORGANIZATIONS</SectionTitle>
            <AddButton>add an agency</AddButton>
          </SectionBar>

          <Lists>
            <List>
              {cities.map(([name, shift]) => (
                <Row key={name} $left={17} $right={2}>
                  <Name $top={36}>{name}</Name>
                  <RowStats shift={shift} />
                </Row>
              ))}
            </List>
            <List>
              {agencies.map(([name, place, link], i) => (
                <Row key={i} $left={14} $right={0}>
                  <Name $top={30}>
                    {name}
                    <Place $link={link}>{place}</Place>
                  </Name>
                  <RowStats shift={-2 * i} />
                </Row>
              ))}
            </List>
          </Lists>
        </Sheet>
      </Backdrop>

      <FooterWrap>
        <FooterSheet>
          <FooterPanel>
            <FooterCol $w={366} $pt={19} $pl={20.5}>LINKS</FooterCol>
            <FooterCol $w={248} $pt={20} $pl={15.5}>CONTACT US</FooterCol>
            <FooterCol $pt={8} $pl={20}>
              <FooterField>
                <FieldText>Enter Keyword</FieldText>
              </FooterField>
              <SearchButton>
                <Magnifier />
              </SearchButton>
            </FooterCol>
          </FooterPanel>
        </FooterSheet>
      </FooterWrap>

      {notes.map((n) => (
        <Note key={n.lines[0][0]} {...n} />
      ))}
    </Page>
  );
}
